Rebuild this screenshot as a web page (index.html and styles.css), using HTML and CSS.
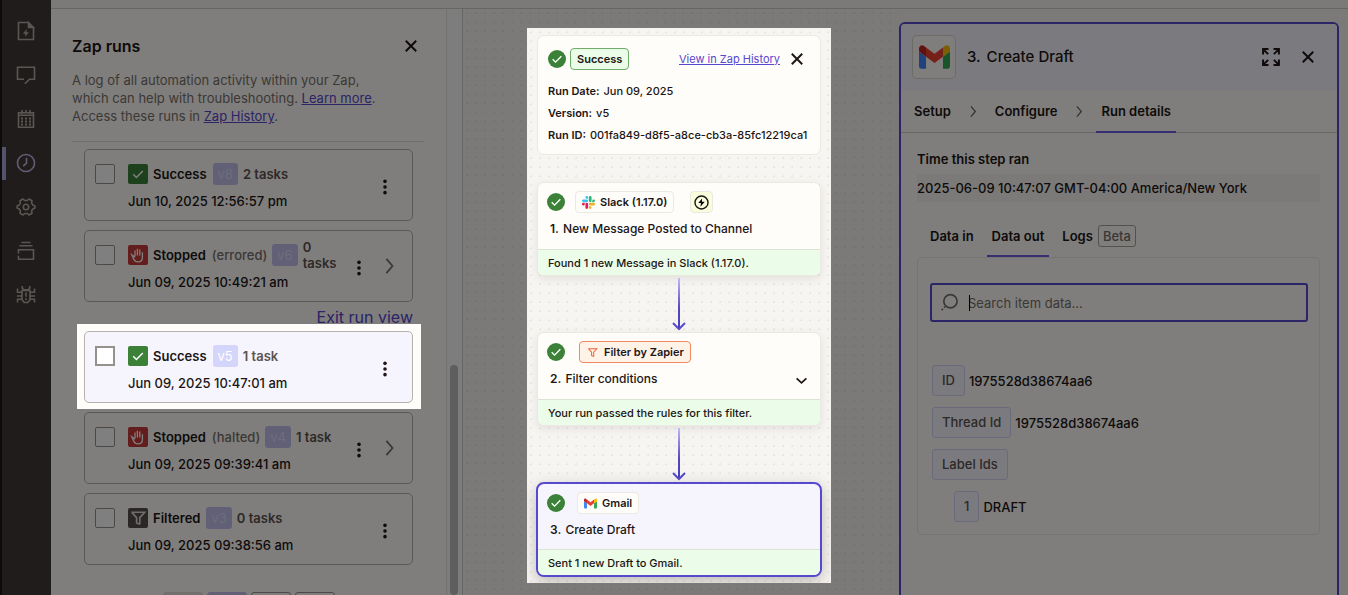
FILE: index.html
```html
<!DOCTYPE html>
<html lang="en">
<head>
<meta charset="utf-8">
<meta name="viewport" content="width=device-width, initial-scale=1">
<title>Zap runs</title>
<link rel="stylesheet" href="styles.css">
</head>
<body>
<svg class="sprite" aria-hidden="true">
  <symbol id="i-check" viewBox="0 0 20 20"><path d="M5.2 10.3l3.2 3.2 6.4-6.6" fill="none" stroke="currentColor" stroke-width="1.5"/></symbol>
  <symbol id="i-hand" viewBox="0 0 20 20"><path d="M7 11.2V5.4M9.4 10.4V3.7M11.8 10.4V4.4M14.4 11V7.2M14.4 10.4v2c0 2.600-1.700 4.400-4.300 4.400-2.300 0-3.800-1.200-4.600-3.100L3.800 9.700l3.200 2.500" fill="none" stroke="currentColor" stroke-width="1.3"/></symbol>
  <symbol id="i-filter" viewBox="0 0 20 20"><path d="M3.500 4.200h13.200l-4.900 5.400v6.900M3.800 4.400l4.800 5.200v5.300l3.200 1.400" fill="none" stroke="currentColor" stroke-width="1.600"/></symbol>
  <symbol id="i-dots" viewBox="0 0 20 20"><circle cx="10" cy="3.700" r="2"/><circle cx="10" cy="10" r="2"/><circle cx="10" cy="16.300" r="2"/></symbol>
  <symbol id="i-close" viewBox="0 0 20 20"><path d="M4.200 4.200l11.600 11.600M15.800 4.200L4.200 15.800" fill="none" stroke="currentColor" stroke-width="2.200"/></symbol>
  <symbol id="i-right" viewBox="0 0 20 20"><path d="M6 2l6.800 8L6 18" fill="none" stroke="currentColor" stroke-width="2"/></symbol>
  <symbol id="i-gmail" viewBox="52 42 88 66"><path fill="#4285f4" d="M58 108h14V74L52 59v43c0 3.320 2.690 6 6 6"/><path fill="#34a853" d="M120 108h14c3.320 0 6-2.690 6-6V59l-20 15"/><path fill="#fbbc04" d="M120 48v26l20-15v-8c0-7.420-8.470-11.650-14.400-7.200"/><path fill="#ea4335" d="M72 74V48l24 18 24-18v26L96 92"/><path fill="#c5221f" d="M52 51v8l20 15V48l-5.600-4.200c-5.940-4.450-14.400-.22-14.400 7.200"/></symbol>
</svg>

<div class="app">
  <nav class="rail" aria-label="Editor tools">
    <button class="rail-btn" aria-label="Drafts"><svg viewBox="0 0 20 20"><path d="M12.500 1.500h-10v17h15V6.500M12.500 1.500l5 5h-5z"/><path class="solid" d="M10.800 8L6.800 12.800h2.700L9 16l4-4.800h-2.700zM12.500 1.500l5 5h-5z"/></svg></button>
    <button class="rail-btn" aria-label="Comments"><svg viewBox="0 0 20 20"><path d="M8 14.200H1.500v-12h17v12h-5L8.800 18.800"/></svg></button>
    <button class="rail-btn" aria-label="Schedule"><svg viewBox="0 0 20 20"><path d="M2.500 3.700h15v14.500h-15zM2.500 6.300h15M6 1v4M14 1v4M10 1v3"/><path class="solid" d="M5 8.500h2v2H5zM9 8.500h2v2H9zM13 8.500h2v2h-2zM5 11.500h2v2H5zM9 11.500h2v2H9zM13 11.500h2v2h-2zM5 14.500h2v2H5zM9 14.500h2v2H9zM13 14.500h2v2h-2z"/></svg></button>
    <button class="rail-btn active" aria-label="Zap runs"><svg viewBox="0 0 20 20"><circle cx="10" cy="10" r="8.500"/><path d="M10.500 4.800v5.400l-3.300 3"/></svg></button>
    <button class="rail-btn" aria-label="Settings"><svg viewBox="0 0 20 20"><path stroke-linejoin="round" d="M7 2l1.700 1.500h2.600L13 2l3 1.700-.4 2.400 1.200 2L18.900 9v2l-2.100.9-1.200 2 .4 2.400-3 1.700-1.700-1.500H8.700L7 18l-3-1.700.4-2.400-1.200-2L1.100 11V9l2.100-.9 1.200-2L4 3.700z"/><circle cx="10" cy="10" r="2.700"/></svg></button>
    <button class="rail-btn" aria-label="Versions"><svg viewBox="0 0 20 20"><path d="M5.500 1.500h9M3.500 4.800h13M2.500 12.500V8.700h15v9.600h-15v-3.600"/></svg></button>
    <button class="rail-btn" aria-label="Debug"><svg viewBox="0 0 20 20"><path d="M6.300 1v2.200l1.500 1.600h4.400l1.500-1.600V1M6 5.500h8v9.300l-2.200 2.700H8.200L6 14.800zM1.500 3.500v3.700H6M18.500 3.500v3.700H14M1 11h5M14 11h5M1.500 17.500v-3.200H6M18.500 17.500v-3.200H14M10 7.500v4.300M10 13.200v1.800"/></svg></button>
  </nav>

  <div class="workspace">
    <div class="topbar"></div>
    <div class="columns">
      <aside class="runs">
        <div class="runs-main">
          <header class="runs-head">
            <h1>Zap runs</h1>
            <button class="icon-btn" aria-label="Close Zap runs"><svg><use href="#i-close"/></svg></button>
          </header>
          <p class="runs-desc">A log of all automation activity within your Zap,<br>which can help with troubleshooting. <a href="#">Learn more</a>.<br>Access these runs in <a href="#">Zap History</a>.</p>
          <div class="run-list">
            <article class="run">
              <input type="checkbox" aria-label="Select run, Jun 10, 2025 12:56:57 pm">
              <div class="run-body">
                <div class="run-top"><svg class="status ok"><use href="#i-check"/></svg><b>Success</b><span class="ver">v8</span><span class="tasks">2 tasks</span></div>
                <time>Jun 10, 2025 12:56:57 pm</time>
              </div>
              <button class="icon-btn more" aria-label="Run actions"><svg><use href="#i-dots"/></svg></button>
            </article>
            <article class="run expandable">
              <input type="checkbox" aria-label="Select run, Jun 09, 2025 10:49:21 am">
              <div class="run-body">
                <div class="run-top"><svg class="status stop"><use href="#i-hand"/></svg><b>Stopped</b><span class="why">(errored)</span><span class="ver">v6</span><span class="tasks">0 tasks</span></div>
                <time>Jun 09, 2025 10:49:21 am</time>
              </div>
              <button class="icon-btn more" aria-label="Run actions"><svg><use href="#i-dots"/></svg></button>
              <button class="icon-btn next" aria-label="Open run"><svg><use href="#i-right"/></svg></button>
            </article>
            <a class="exit" href="#">Exit run view</a>
            <div class="spot-run">
              <article class="run selected">
                <input type="checkbox" aria-label="Select run, Jun 09, 2025 10:47:01 am">
                <div class="run-body">
                  <div class="run-top"><svg class="status ok"><use href="#i-check"/></svg><b>Success</b><span class="ver">v5</span><span class="tasks">1 task</span></div>
                  <time>Jun 09, 2025 10:47:01 am</time>
                </div>
                <button class="icon-btn more" aria-label="Run actions"><svg><use href="#i-dots"/></svg></button>
              </article>
            </div>
            <article class="run expandable">
              <input type="checkbox" aria-label="Select run, Jun 09, 2025 09:39:41 am">
              <div class="run-body">
                <div class="run-top"><svg class="status stop"><use href="#i-hand"/></svg><b>Stopped</b><span class="why">(halted)</span><span class="ver">v4</span><span class="tasks">1 task</span></div>
                <time>Jun 09, 2025 09:39:41 am</time>
              </div>
              <button class="icon-btn more" aria-label="Run actions"><svg><use href="#i-dots"/></svg></button>
              <button class="icon-btn next" aria-label="Open run"><svg><use href="#i-right"/></svg></button>
            </article>
            <article class="run">
              <input type="checkbox" aria-label="Select run, Jun 09, 2025 09:38:56 am">
              <div class="run-body">
                <div class="run-top"><svg class="status filtered"><use href="#i-filter"/></svg><b>Filtered</b><span class="ver">v3</span><span class="tasks">0 tasks</span></div>
                <time>Jun 09, 2025 09:38:56 am</time>
              </div>
              <button class="icon-btn more" aria-label="Run actions"><svg><use href="#i-dots"/></svg></button>
            </article>
          </div>
          <div class="pager">
            <button class="prev" aria-label="Previous page"></button><button class="current-page" aria-label="Page 1"></button><button aria-label="Page 2"></button><button aria-label="Next page"></button>
          </div>
        </div>
        <div class="scrollbar"><div class="thumb"></div></div>
      </aside>

      <main class="canvas">
        <div class="spot-zap">
          <section class="card run-info">
            <div class="info-head">
              <svg class="dot-ok"><use href="#i-check"/></svg>
              <span class="tag good">Success</span>
              <a href="#">View in Zap History</a>
              <button class="icon-btn" aria-label="Close run"><svg><use href="#i-close"/></svg></button>
            </div>
            <dl>
              <div><dt>Run Date:</dt><dd>Jun 09, 2025</dd></div>
              <div><dt>Version:</dt><dd>v5</dd></div>
              <div><dt>Run ID:</dt><dd>001fa849-d8f5-a8ce-cb3a-85fc12219ca1</dd></div>
            </dl>
          </section>

          <section class="card step">
            <div class="step-main">
              <div class="step-tags">
                <svg class="dot-ok"><use href="#i-check"/></svg>
                <span class="tag"><svg viewBox="0 0 123 123"><path fill="#e01e5a" d="M25.800 77.600a12.900 12.900 0 1 1-12.900-12.900h12.900zM32.300 77.600a12.900 12.900 0 0 1 25.800 0v32.300a12.900 12.900 0 0 1-25.800 0z"/><path fill="#36c5f0" d="M45.200 25.800a12.900 12.900 0 1 1 12.900-12.900v12.900zM45.200 32.300a12.900 12.900 0 0 1 0 25.800H12.900a12.900 12.900 0 0 1 0-25.800z"/><path fill="#2eb67d" d="M97 45.200a12.900 12.900 0 1 1 12.900 12.900H97zM90.500 45.200a12.900 12.900 0 0 1-25.800 0V12.900a12.900 12.900 0 0 1 25.800 0z"/><path fill="#ecb22e" d="M77.600 97a12.900 12.900 0 1 1-12.900 12.900V97zM77.600 90.500a12.900 12.900 0 0 1 0-25.800h32.300a12.900 12.900 0 0 1 0 25.800z"/></svg>Slack (1.17.0)</span>
                <span class="tag bolt"><svg viewBox="0 0 20 20"><circle cx="10" cy="10" r="8.700" fill="none" stroke="currentColor" stroke-width="1.900"/><path d="M10.800 4.500L5.700 10.800h3.500l-.6 4.700 5.700-6.600h-3.800z"/></svg></span>
              </div>
              <h2><b>1.</b> New Message Posted to Channel</h2>
            </div>
            <p class="result">Found 1 new Message in Slack (1.17.0).</p>
          </section>
          <svg class="arrow" viewBox="0 0 14 54"><rect class="shaft" x="6" y="0" width="2" height="51"/><path d="M1 45l6 6 6-6"/></svg>
          <section class="card step">
            <div class="step-main">
              <div class="step-tags">
                <svg class="dot-ok"><use href="#i-check"/></svg>
                <span class="tag filter-tag"><svg><use href="#i-filter"/></svg>Filter by Zapier</span>
              </div>
              <h2><b>2.</b> Filter conditions</h2>
              <button class="icon-btn expand" aria-label="Show conditions"><svg viewBox="0 0 12 12"><path d="M1.500 4L6 8.200 10.500 4" fill="none" stroke="currentColor" stroke-width="1.600"/></svg></button>
            </div>
            <p class="result">Your run passed the rules for this filter.</p>
          </section>
          <svg class="arrow" viewBox="0 0 14 54"><rect class="shaft" x="6" y="0" width="2" height="51"/><path d="M1 45l6 6 6-6"/></svg>
          <section class="card step current">
            <div class="step-main">
              <div class="step-tags">
                <svg class="dot-ok"><use href="#i-check"/></svg>
                <span class="tag gmail-tag"><svg><use href="#i-gmail"/></svg>Gmail</span>
              </div>
              <h2><b>3.</b> Create Draft</h2>
            </div>
            <p class="result">Sent 1 new Draft to Gmail.</p>
          </section>
        </div>
      </main>

      <section class="details">
        <header class="details-head">
          <span class="logo"><svg><use href="#i-gmail"/></svg></span>
          <h2><span>3.</span> Create Draft</h2>
          <button class="icon-btn big" aria-label="Expand"><svg viewBox="0 0 20 20"><path d="M1.200 7.200V1.200h6M1.200 1.200l5.600 5.600M12.800 1.200h6v6M18.800 1.200l-5.600 5.600M1.200 12.800v6h6M1.200 18.800l5.600-5.600M18.800 12.800v6h-6M18.800 18.800l-5.600-5.600" fill="none" stroke="currentColor" stroke-width="2.200"/></svg></button>
          <button class="icon-btn" aria-label="Close details"><svg><use href="#i-close"/></svg></button>
        </header>
        <nav class="steps" aria-label="Step sections">
          <button>Setup</button><svg><use href="#i-right"/></svg><button>Configure</button><svg><use href="#i-right"/></svg><button class="on">Run details</button>
        </nav>
        <div class="details-body">
          <h3>Time this step ran</h3>
          <p class="ran">2025-06-09 10:47:07 GMT-04:00 America/New York</p>
          <div class="tabs" role="tablist">
            <button role="tab">Data in</button><button role="tab" class="on" aria-selected="true">Data out</button><button role="tab">Logs <span class="beta">Beta</span></button>
          </div>
          <div class="data">
            <label class="search">
              <svg viewBox="0 0 20 20"><circle cx="11" cy="8.700" r="7"/><path d="M5.500 14.200l-1.300 1.300M3 16.800L1.700 18"/></svg>
              <span class="caret"></span>
              <input type="text" placeholder="Search item data..." aria-label="Search item data">
            </label>
            <dl class="fields">
              <div><dt>ID</dt><dd>1975528d38674aa6</dd></div>
              <div><dt>Thread Id</dt><dd>1975528d38674aa6</dd></div>
              <div><dt>Label Ids</dt></div>
              <div class="nested"><dt>1</dt><dd>DRAFT</dd></div>
            </dl>
          </div>
        </div>
      </section>
    </div>
  </div>
</div>
<div class="dim"></div>
<svg class="sprite" aria-hidden="true"><defs><linearGradient id="fade" x1="0" y1="0" x2="0" y2="1"><stop offset="0" stop-color="#c1b9f7"/><stop offset=".6" stop-color="#5547bd"/><stop offset="1" stop-color="#4a3bc0"/></linearGradient></defs></svg>
</body>
</html>
```
FILE: styles.css
```css
* { box-sizing: border-box; }

:root {
  --paper: #fffdf9;
  --lilac: #f6f5fd;
  --canvas: #f7f5f2;
  --ink: #201515;
  --purple: #5648cf;
  --line: #ece9e2;
}

body {
  margin: 0;
  height: 100vh;
  overflow: hidden;
  font: 500 13px/18px Inter, "Liberation Sans", sans-serif;
  color: var(--ink);
  background: var(--canvas);
}

h1, h2, h3, p, dl, dd { margin: 0; font-weight: 500; }
b, dt { font-weight: 600; }
button { margin: 0; padding: 0; border: 0; background: none; font: inherit; color: inherit; }
svg { display: block; flex: none; }
a { color: var(--purple); }

.sprite { position: absolute; width: 0; height: 0; }
.dim { position: fixed; inset: 0; z-index: 1; background: rgba(0, 0, 0, 0.5); pointer-events: none; }

.app { display: flex; height: 100vh; }

/* Tool rail */
.rail {
  flex: none;
  width: 51px;
  padding-top: 9px;
  background: #403836;
  border-left: 2px solid #1c1817;
}
.rail-btn {
  display: grid;
  place-items: center;
  width: 100%;
  height: 44px;
  padding-right: 2px;
  color: #b3ada6;
}
.rail-btn svg { width: 20px; height: 20px; fill: none; stroke: currentColor; stroke-width: 1.600; }
.rail-btn .solid { fill: currentColor; stroke: none; }
.rail-btn.active {
  color: #bebbe8;
  background: linear-gradient(#a9a7d8, #a9a7d8) left center / 4px 33px no-repeat;
}

.workspace { flex: 1; min-width: 0; display: flex; flex-direction: column; }
.topbar { flex: none; height: 9px; background: var(--canvas); border-bottom: 1px solid #cfccc7; }
.columns { flex: 1; min-height: 0; display: flex; }

.icon-btn { display: grid; place-items: center; width: 18px; height: 20px; flex: none; }
.icon-btn svg { width: 18px; height: 18px; fill: currentColor; }

/* Runs list */
.runs { flex: none; width: 412px; display: flex; background: var(--paper); border-right: 1px solid #cfccc7; overflow: hidden; }
.runs-main { flex: 1; padding: 25px 22px 0 21px; }
.runs-head { display: flex; justify-content: space-between; align-items: center; height: 24px; padding-right: 4px; }
.runs-head h1 { font-size: 16px; font-weight: 600; line-height: 24px; }
.runs-desc {
  padding: 13px 0 16px;
  border-bottom: 1px solid #e0ddd6;
  font-size: 13px;
  line-height: 18px;
  font-weight: 400;
  color: #77716b;
}
.run-list { display: flex; flex-direction: column; gap: 9px; padding: 7px 11px 0 12px; }
.run {
  display: flex;
  align-items: center;
  gap: 13px;
  height: 72px;
  padding: 0 18px 0 10px;
  background: var(--paper);
  border: 1px solid #b5b1ab;
  border-radius: 5px;
}
.run.expandable { padding-right: 13px; }
.run input {
  appearance: none;
  align-self: flex-start;
  flex: none;
  width: 20px;
  height: 20px;
  margin: 14px 0 0;
  border: 1px solid #95928e;
  border-radius: 2px;
  background: #fff;
}
.selected input { border: 2px solid #95928e; border-radius: 0; }
.run-body { flex: 1; min-width: 0; padding-top: 2px; }
.run-top { display: flex; align-items: center; gap: 5px; height: 22px; line-height: 16px; }
.run-top b { margin-right: 1px; }
.run time { display: block; margin-top: 7px; line-height: 18px; white-space: nowrap; }
.status { width: 20px; height: 20px; border-radius: 2px; color: #fff; }
.status.ok { background: #3b8238; }
.status.stop { background: #c93a3a; }
.status.filtered { background: #574e4c; color: #ddd; }
.ver { flex: none; padding: 3px 5px; border-radius: 3px; background: #d3d5fb; color: #fff; font-weight: 400; }
.run:not(.selected) .ver { background: #c2c1ec; color: #dcdbf8; }
.why { color: #77716b; }
.tasks { color: #5c534f; font-weight: 600; }
.more { margin-top: 4px; }
.next { color: #77716b; }
.selected { background: var(--lilac); }
.spot-run { position: relative; z-index: 2; margin: -7px -8px -6px -7px; padding: 7px 8px 6px 7px; background: var(--paper); }
.exit { align-self: flex-end; margin: -4px 0 -5px; font-size: 16px; font-weight: 400; line-height: 20px; }

.pager { display: flex; gap: 4px; margin: 27px 0 0 91px; }
.pager button { width: 40px; height: 32px; border: 1px solid #95928e; border-radius: 3px; }
.pager .prev { background: #e3e0d8; border-color: #e3e0d8; }
.pager .current-page { background: #c2c1ec; border-color: #c2c1ec; }

.scrollbar { flex: none; width: 16px; padding: 356px 4px 0 3px; background: #fafafb; border-left: 1px solid #e6e4e2; }
.thumb { width: 8px; height: 100%; border-radius: 4px; background: #bcbcbe; }

/* Flow canvas */
.canvas, .spot-zap { background: radial-gradient(circle, #e8e5e0 1px, transparent 1px) 0 0 / 9px 9px var(--canvas); }
.canvas { flex: 1; min-width: 0; display: flex; justify-content: center; align-items: flex-start; padding: 19px 4px 0 0; }
.spot-zap {
  position: relative;
  z-index: 2;
  width: 304px;
  padding: 7px 10px 6px;
  display: flex;
  flex-direction: column;
  overflow: hidden;
}
.card { background: var(--paper); border: 1px solid var(--line); border-radius: 7px; }
.run-info { padding: 12px 10px 8px; margin-bottom: 27px; }
.info-head { display: flex; align-items: center; gap: 4px; height: 22px; margin-bottom: 10px; }
.info-head a { margin-left: auto; font-size: 11px; font-weight: 400; }
.info-head .icon-btn { margin: 0 4px 0 4px; }
.dot-ok { width: 18px; height: 18px; border-radius: 50%; background: #3b8238; color: #fff; }
.tag {
  display: flex;
  align-items: center;
  gap: 5px;
  height: 22px;
  padding: 0 6px;
  border: 1px solid var(--line);
  border-radius: 4px;
  font-size: 11px;
  font-weight: 600;
  background: var(--paper);
}
.tag svg { width: 13px; height: 13px; }
.good { background: #ebfce8; border-color: #6fae69; }
.run-info dl, .result { font-size: 11px; }
.run-info dl div { display: flex; gap: 4px; line-height: 22px; white-space: nowrap; }

.step { overflow: hidden; box-shadow: 0 3px 8px rgba(60, 50, 40, 0.1); flex: none; }
.step-main { position: relative; height: 66px; padding: 8px 9px 0; }
.step-tags { display: flex; align-items: center; height: 22px; }
.step-tags .tag { margin-left: 10px; }
.step-tags .bolt { margin-left: 16px; padding: 0 3px; background: #f8fddc; }
.bolt svg { width: 15px; height: 15px; }
.step-tags .filter-tag { margin-left: 14px; background: #fff3e8; border-color: #f08a66; }
.filter-tag svg { color: #f0653a; }
.step-tags .gmail-tag { margin-left: 12px; }
.step h2 { margin-top: 7px; padding-left: 3px; font-size: 12px; line-height: 18px; }
.step h2 b { margin-right: 1px; }
.result { padding: 4px 10px 3px; border-top: 1px solid #dbe3d4; background: #ebfce8; }
.expand { position: absolute; right: 10px; top: 37px; }
.expand svg { width: 13px; height: 13px; }
.current { margin: 0 -1px; border: 2px solid var(--purple); border-radius: 8px; background: var(--lilac); box-shadow: 0 5px 16px rgba(60, 50, 40, 0.3); }
.current .step-main { height: 65px; }
.arrow { align-self: center; width: 14px; height: 54px; margin-top: 2px; fill: none; stroke: var(--purple); stroke-width: 2; }
.shaft { fill: url(#fade); stroke: none; }

/* Step details */
.details {
  flex: none;
  width: 440px;
  margin: 13px 9px 0 0;
  border: 2px solid var(--purple);
  border-bottom: 0;
  border-radius: 6px 6px 0 0;
  background: var(--paper);
}
.details-head { display: flex; align-items: center; height: 66px; padding: 0 20px 0 11px; background: var(--lilac); border-radius: 4px 4px 0 0; }
.details-head h2 { flex: 1; margin-left: 11px; font-size: 15px; }
.details-head h2 span { margin-right: 2px; }
.details-head .big { margin-right: 19px; }
.logo { display: grid; place-items: center; width: 44px; height: 44px; border: 1px solid #d9d6cf; border-radius: 5px; background: var(--paper); }
.logo svg { width: 31px; height: 24px; }
.steps { display: flex; align-items: center; height: 43px; padding-left: 8px; border-bottom: 1px solid #cfccc7; font-weight: 600; }
.steps button { height: 43px; padding: 2px 5px 0; border-bottom: 2px solid transparent; }
.steps .on, .tabs .on { border-bottom-color: #6c5ce7; }
.steps svg { width: 13px; height: 13px; margin: 0 10px 0 11px; color: #6b6560; }
.details-body { padding: 17px 17px 0 16px; }
.details-body h3 { font-size: 13px; font-weight: 600; line-height: 18px; }
.ran { margin-top: 6px; line-height: 28px; background: var(--canvas); white-space: nowrap; }
.tabs { display: flex; height: 55px; padding: 14px 0 0 8px; }
.tabs button { display: flex; align-items: center; gap: 5px; margin-right: 8px; padding: 0 5px; border-bottom: 2px solid transparent; font-weight: 600; }
.beta { height: 22px; padding: 0 4px; border: 1px solid #a8a39d; border-radius: 3px; line-height: 20px; font-weight: 500; color: #77716b; }
.data { padding: 25px 11px 12px 12px; border: 1px solid var(--line); border-radius: 5px; }
.search { position: relative; display: flex; align-items: center; height: 39px; padding: 0 8px; border: 2px solid var(--purple); border-radius: 3px; }
.search svg { width: 19px; height: 19px; fill: none; stroke: #77716b; stroke-width: 1.800; }
.search input { flex: 1; min-width: 0; margin-left: 9px; padding: 0; border: 0; outline: 0; background: none; font: inherit; color: var(--ink); }
.search input::placeholder { color: #77716b; opacity: 1; font-weight: 400; }
.caret { position: absolute; left: 37px; top: 10px; width: 1px; height: 16px; background: #000; }
.fields { display: flex; flex-direction: column; gap: 11px; padding: 43px 0 0 2px; }
.fields div { display: flex; align-items: center; gap: 4px; }
.fields dt { padding: 0 9px; border: 1px solid #d6d5f5; border-radius: 3px; line-height: 29px; font-weight: 500; color: #5c534f; background: var(--lilac); }
.fields .nested { padding-left: 22px; }
```
